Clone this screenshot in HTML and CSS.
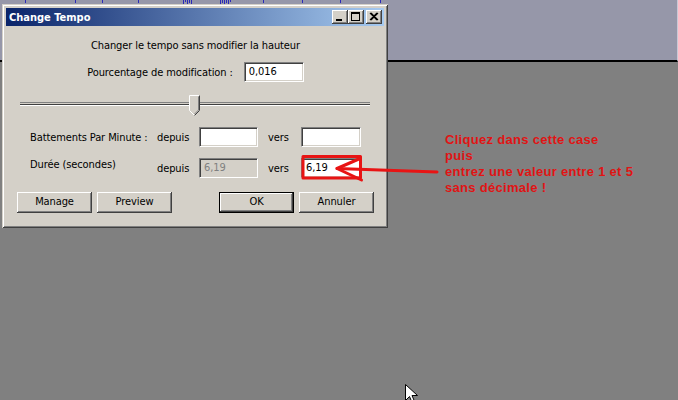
FILE: index.html
```html
<!DOCTYPE html>
<html lang="fr">
<head>
<meta charset="UTF-8">
<title>Change Tempo</title>
<link rel="stylesheet" href="styles.css">
</head>
<body>
<div class="desktop">
    <div class="track">
        <svg class="ticks" width="678" height="6" viewBox="0 0 678 6">
            <g stroke="#2a2ab8" stroke-width="1">
                <path d="M25.5 0v3M75.5 0v3M102.5 0v3M138.5 0v3M183.5 0v4M185.5 0v2M187.5 0v4M189.5 0v3M191.5 0v4M220.5 0v4M222.5 0v3M224.5 0v4M226.5 0v3M228.5 0v4M230.5 0v2M263.5 0v3M302.5 0v3M340.5 0v3M380.5 0v3"/>
            </g>
        </svg>
    </div>

    <div class="dialog">
        <div class="titlebar">
            <span class="title">Change Tempo</span>
            <div class="controls">
                <span class="ctl"><svg width="16" height="14" viewBox="0 0 16 14"><rect x="4" y="9" width="6" height="2" fill="#000"/></svg></span>
                <span class="ctl"><svg width="16" height="14" viewBox="0 0 16 14"><rect x="3.5" y="2.5" width="8" height="8" fill="none" stroke="#000"/><rect x="3" y="2" width="9" height="2" fill="#000"/></svg></span>
                <span class="ctl close"><svg width="16" height="14" viewBox="0 0 16 14"><path d="M4 3l7 7M11 3l-7 7M5 3l7 7M12 3l-7 7" stroke="#000" stroke-width="1.1"/></svg></span>
            </div>
        </div>

        <div class="body">
            <p class="intro">Changer le tempo sans modifier la hauteur</p>

            <div class="percent">
                <span class="label">Pourcentage de modification :</span>
                <span class="field pct">0,016</span>
            </div>

            <div class="slider">
                <div class="groove"></div>
                <svg class="thumb" width="12" height="22" viewBox="0 0 12 22">
                    <path d="M0.5 0.5h10v15l-5 5l-5-5z" fill="#d4d0c8" stroke="#fff"/>
                    <path d="M10.5 0.5v15l-5 5" fill="none" stroke="#404040"/>
                    <path d="M9.5 1.5v13.5l-4 4" fill="none" stroke="#808080"/>
                </svg>
            </div>

            <div class="rows">
                <span class="label">Battements Par Minute :</span>
                <span class="mid">depuis</span>
                <span class="field"></span>
                <span class="mid vers">vers</span>
                <span class="field"></span>

                <span class="label top">Durée (secondes)</span>
                <span class="mid">depuis</span>
                <span class="field off">6,19</span>
                <span class="mid vers">vers</span>
                <span class="field">6,19</span>
            </div>

            <div class="buttons">
                <div class="group">
                    <span class="btn">Manage</span>
                    <span class="btn">Preview</span>
                </div>
                <div class="group">
                    <span class="btn default">OK</span>
                    <span class="btn">Annuler</span>
                </div>
            </div>
        </div>
    </div>

    <div class="note">
        Cliquez dans cette case<br>
        puis<br>
        entrez une valeur entre 1 et 5<br>
        sans décimale !
    </div>

    <svg class="marks" width="678" height="400" viewBox="0 0 678 400">
        <g stroke="#e81414" stroke-width="3" fill="none" stroke-linecap="round" stroke-linejoin="round">
            <rect x="303" y="156.5" width="57.5" height="21.5" stroke-linecap="butt"/>
            <path d="M437 172L337 168.5"/>
            <path d="M360 158.5L337 168.5L361.5 180"/>
        </g>
        <path d="M405.5 384.5v16l4-4l3 7l2.5-1l-3-7h5.5z" fill="#fff" stroke="#000"/>
    </svg>
</div>
</body>
</html>
```

FILE: styles.css
```css
*,
*::before,
*::after {
    box-sizing: border-box;
}
body {
    margin: 0;
    background: #808080;
    font-family: "DejaVu Sans Condensed", "DejaVu Sans", sans-serif;
    font-stretch: semi-condensed;
    font-size: 11px;
    color: #000;
}
.desktop {
    position: relative;
    width: 678px;
    height: 400px;
    overflow: hidden;
}

.track {
    height: 62px;
    background: #9697a9;
    border-bottom: 2px solid #000;
    border-right: 1px solid #c9c9d6;
}
.ticks {
    display: block;
}

/* the window */
.dialog {
    position: absolute;
    left: 2px;
    top: 4px;
    width: 386px;
    height: 224px;
    background: #d4d0c8;
    padding: 4px;
    box-shadow: inset 1px 1px 0 #d4d0c8, inset -1px -1px 0 #404040,
                inset 2px 2px 0 #fff, inset -2px -2px 0 #808080;
    display: flex;
    flex-direction: column;
}
.titlebar {
    height: 18px;
    display: flex;
    align-items: center;
    justify-content: space-between;
    padding: 0 2px 0 3px;
    background: linear-gradient(to right, #0a246a, #a6caf0);
}
.title {
    color: #fff;
    font-weight: bold;
}
.controls {
    display: flex;
}
.ctl {
    width: 16px;
    height: 14px;
    background: #d4d0c8;
    box-shadow: inset -1px -1px 0 #404040, inset 1px 1px 0 #fff,
                inset -2px -2px 0 #808080;
}
.ctl svg {
    display: block;
}
.ctl.close {
    margin-left: 2px;
}

.body {
    padding: 13px 10px 0 11px;
    letter-spacing: -0.1px;
}
.intro {
    margin: 0;
    line-height: 13px;
    text-align: center;
}
.percent {
    margin-top: 10px;
    display: flex;
    justify-content: center;
    align-items: center;
    gap: 11px;
}
.field {
    height: 20px;
    line-height: 18px;
    padding: 0 4px;
    background: #fff;
    border: 1px solid;
    border-color: #808080 #fff #fff #808080;
    box-shadow: inset 1px 1px 0 #404040, inset -1px -1px 0 #d4d0c8;
    white-space: nowrap;
}
.field.pct {
    width: 60px;
}
.field.off {
    background: #d4d0c8;
    color: #808080;
}

.slider {
    position: relative;
    margin: 10px 0 0 3px;
    width: 350px;
    height: 26px;
}
.groove {
    position: absolute;
    left: 0;
    right: 0;
    top: 10px;
    height: 4px;
    border-top: 1px solid #808080;
    border-bottom: 1px solid #fff;
    background: #404040;
    box-shadow: 0 1px 0 #d4d0c8 inset;
}
.thumb {
    position: absolute;
    left: 169px;
    top: 3px;
}

.rows {
    margin-top: 9px;
    padding-left: 13px;
    display: grid;
    grid-template-columns: 127px 42px 59px 43px 60px;
    grid-auto-rows: 20px;
    row-gap: 11px;
    align-items: center;
}
.rows .top {
    align-self: start;
    line-height: 14px;
}
.mid.vers {
    padding-left: 10px;
}

.buttons {
    margin-top: 14px;
    display: flex;
    justify-content: space-between;
}
.group {
    display: flex;
    gap: 5px;
}
.btn {
    width: 75px;
    height: 21px;
    line-height: 20px;
    text-align: center;
    box-shadow: inset -1px -1px 0 #404040, inset 1px 1px 0 #fff,
                inset -2px -2px 0 #808080;
}
.btn.default {
    border: 1px solid #000;
    line-height: 18px;
}

.note {
    position: absolute;
    left: 445px;
    top: 132px;
    font-family: "Liberation Sans", Arial, sans-serif;
    font-weight: bold;
    font-size: 13px;
    letter-spacing: 0.3px;
    line-height: 16px;
    color: #e01414;
}
.marks {
    position: absolute;
    left: 0;
    top: 0;
}
```
